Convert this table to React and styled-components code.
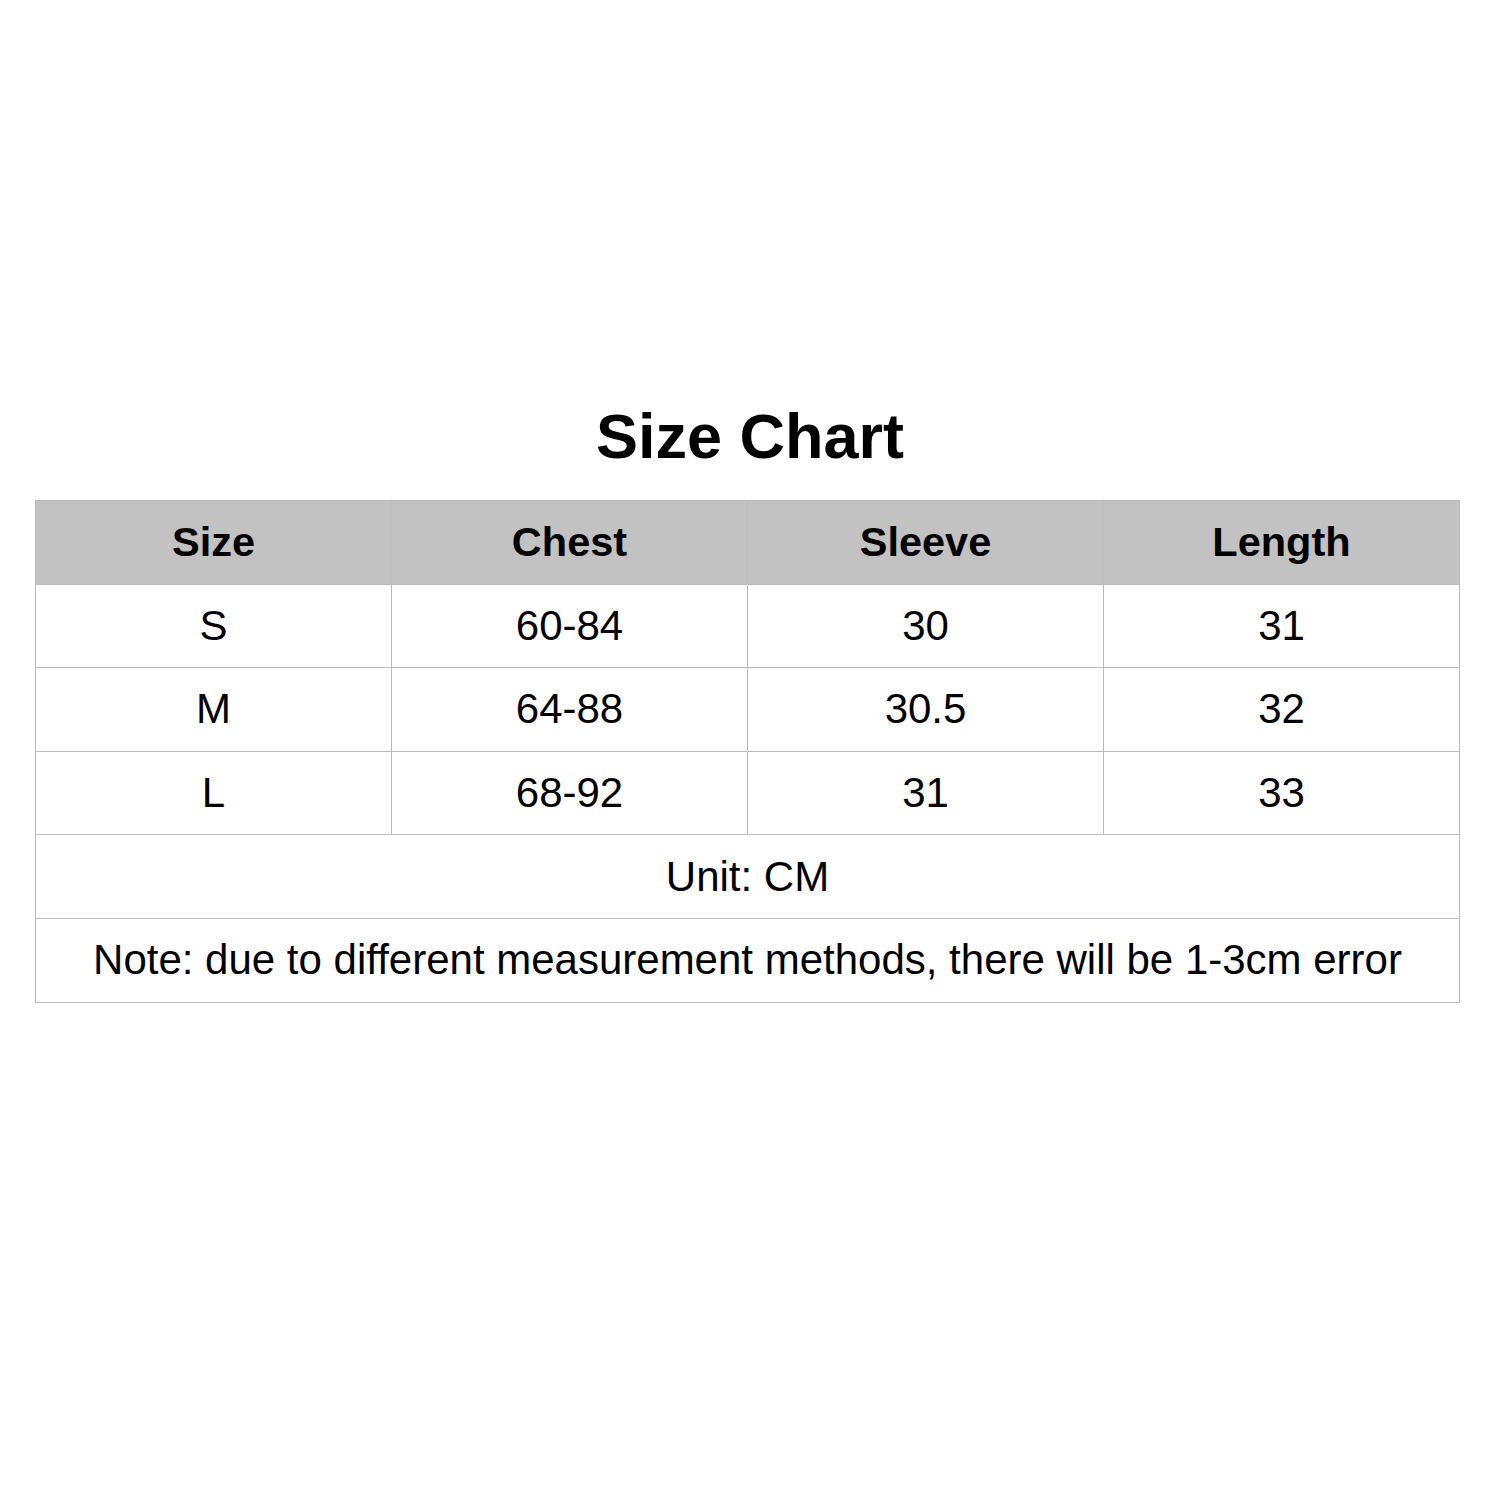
import React from 'react';
import styled, { createGlobalStyle } from 'styled-components';

const GlobalStyle = createGlobalStyle`
  body {
    margin: 0;
    background: #ffffff;
    font-family: "Liberation Sans", Arial, Helvetica, sans-serif;
    color: #000;
  }
`;

const Page = styled.div`
  width: 1500px;
  height: 1500px;
  padding-top: 405px;
  box-sizing: border-box;
`;

const Title = styled.h1`
  margin: 0 0 33px;
  font-size: 63px;
  line-height: 62px;
  font-weight: 700;
  text-align: center;
`;

const Table = styled.table`
  width: 1425px;
  margin-left: 35px;
  border-collapse: collapse;
  table-layout: fixed;
`;

const Row = styled.tr`
  height: 83.6px;
`;

const Cell = styled.td`
  border: 1px solid #bcbcbc;
  padding: 0;
  text-align: center;
  vertical-align: middle;
  font-size: ${(p) => (p.$head ? '41.5px' : '42px')};
  font-weight: ${(p) => (p.$head ? 700 : 400)};
  background: ${(p) => (p.$head ? '#c1c2c1' : '#ffffff')};
  color: #000;
`;

const head = ['Size', 'Chest', 'Sleeve', 'Length'];
const rows = [
  ['S', '60-84', '30', '31'],
  ['M', '64-88', '30.5', '32'],
  ['L', '68-92', '31', '33'],
];

const App = () => (
  <Page>
    <GlobalStyle />
    <Title>Size Chart</Title>
    <Table>
      <tbody>
        <Row>
          {head.map((h) => (
            <Cell as='th' $head key={h}>{h}</Cell>
          ))}
        </Row>
        {rows.map((r) => (
          <Row key={r[0]}>
            {r.map((v, i) => (
              <Cell key={i}>{v}</Cell>
            ))}
          </Row>
        ))}
        <Row>
          <Cell colSpan={4}>Unit: CM</Cell>
        </Row>
        <Row>
          <Cell colSpan={4}>Note: due to different measurement methods, there will be 1-3cm error</Cell>
        </Row>
      </tbody>
    </Table>
  </Page>
);

export default App;
